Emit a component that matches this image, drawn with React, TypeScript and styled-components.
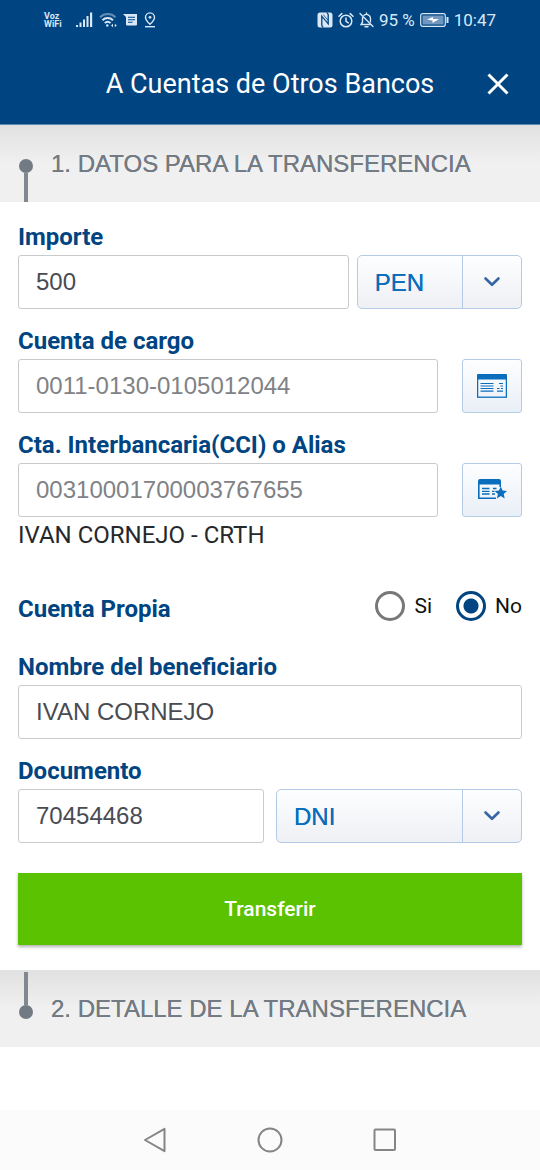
import React, { useState } from "react";
import styled, { createGlobalStyle, css } from "styled-components";

const navy = "#004481";
const blue = "#0a6ebd";
const slate = "#727a84";
const paleBlue = "#b5cae6";
const helvetica = `"Liberation Sans", Helvetica, Arial, sans-serif`;

const GlobalStyle = createGlobalStyle`
  *, *::before, *::after { box-sizing: border-box; }
  body { margin: 0; background: #fff; font-family: Roboto, sans-serif; }
  button, input, select { margin: 0; font: inherit; }
`;

const Screen = styled.div`
  display: flex;
  flex-direction: column;
  min-height: 100vh;
`;

const Header = styled.header`
  background: ${navy};
  color: #fff;
  border-bottom: 1px solid #5c88b3;
`;

const StatusBar = styled.div`
  display: flex;
  justify-content: space-between;
  align-items: center;
  height: 40px;
  padding: 0 44px;
  color: #d9e8f7;
  font-size: 17px;
  line-height: 20px;
`;

const StatusGroup = styled.div<{ $gap: number }>`
  display: flex;
  align-items: center;
  gap: ${(p) => p.$gap}px;

  svg { display: block; flex: none; }
`;

const Carrier = styled.span`
  width: 26px;
  font-size: 9px;
  line-height: 8px;
  font-weight: 700;
`;

const Battery = styled.span`
  white-space: nowrap;
`;

const TitleBar = styled.div`
  display: grid;
  grid-template-columns: 44px 1fr 44px;
  align-items: center;
  height: 84px;
  padding: 4px 20px 0;
`;

const Title = styled.h1`
  grid-column: 2;
  margin: 0;
  font-size: 27px;
  line-height: 36px;
  font-weight: 400;
  text-align: center;
  white-space: nowrap;
`;

const CloseButton = styled.button`
  display: grid;
  place-items: center;
  width: 44px;
  height: 44px;
  padding: 0;
  border: 0;
  background: none;
  color: #fff;
`;

const Step = styled.section`
  display: flex;
  align-items: center;
  gap: 18px;
  height: 77px;
  padding-left: 19px;
  background: linear-gradient(#e1e1e1, #f0f0f0 50%);
`;

const Marker = styled.span<{ $end?: boolean }>`
  display: flex;
  flex-direction: ${(p) => (p.$end ? "column-reverse" : "column")};
  align-items: center;
  align-self: stretch;
  width: 14px;
  padding: ${(p) => (p.$end ? "2px 0 28px" : "34px 0 0")};

  &::before {
    content: "";
    width: 14px;
    height: 14px;
    border-radius: 50%;
    background: ${slate};
  }

  &::after {
    content: "";
    flex: 1;
    width: 4px;
    background: #82888f;
  }
`;

/* Liberation Sans has no medium weight: a shadow without blur thickens the regular one. */
const mediumHelvetica = css`
  font-family: ${helvetica};
  font-weight: 400;
  text-shadow: 0 0 0 currentColor;
`;

const StepTitle = styled.h2`
  ${mediumHelvetica}
  margin: 0;
  color: ${slate};
  font-size: 24px;
  line-height: 28px;
`;

const Form = styled.form`
  display: flex;
  flex-direction: column;
  gap: 18px;
  padding: 21px 18px 25px;
`;

const Field = styled.div`
  display: flex;
  flex-direction: column;
  gap: 4px;
`;

const labelText = css`
  color: ${navy};
  font-size: 24px;
  line-height: 28px;
  font-weight: 700;
`;

const Label = styled.label`
  ${labelText}
`;

const FieldRow = styled.div<{ $columns?: string; $gap?: number }>`
  display: grid;
  grid-template-columns: ${(p) => p.$columns ?? "1fr"};
  gap: ${(p) => p.$gap ?? 0}px;
`;

const TextInput = styled.input<{ $muted?: boolean }>`
  width: 100%;
  min-width: 0;
  height: 54px;
  padding: 0 17px;
  border: 1px solid #c9cacc;
  border-radius: 3px;
  background: #fff;
  color: ${(p) => (p.$muted ? "#7f8286" : "#484b52")};
  font-family: ${helvetica};
  font-size: 24px;
`;

const SelectBox = styled.span`
  display: grid;
  grid-template-columns: 1fr 59px;
  height: 54px;
  border: 1px solid ${paleBlue};
  border-radius: 5px;
  background: linear-gradient(#fdfeff, #eef0f4);
`;

const NativeSelect = styled.select`
  ${mediumHelvetica}
  grid-area: 1 / 1 / 2 / 3;
  appearance: none;
  min-width: 0;
  padding: 0 17px;
  border: 0;
  background: none;
  color: ${blue};
  font-size: 24px;
`;

const SelectArrow = styled.span`
  grid-area: 1 / 2 / 2 / 3;
  display: grid;
  place-items: center;
  border-left: 1px solid ${paleBlue};
  pointer-events: none;
`;

const IconButton = styled.button`
  display: grid;
  place-items: center;
  height: 54px;
  padding: 0;
  border: 1px solid ${paleBlue};
  border-radius: 3px;
  background: linear-gradient(#fdfeff, #e9eff7);
  color: ${blue};
`;

const Helper = styled.p`
  margin: 0;
  color: #26282b;
  font-size: 24px;
  line-height: 28px;
`;

const RadioRow = styled.fieldset`
  display: flex;
  align-items: center;
  justify-content: space-between;
  height: 32px;
  min-width: 0;
  margin: 21px 0 15px;
  padding: 0;
  border: 0;
`;

const RadioTitle = styled.span`
  ${labelText}
  padding-top: 7px;
`;

const RadioOptions = styled.div`
  display: flex;
  gap: 24px;
`;

const RadioLabel = styled.label`
  display: flex;
  align-items: center;
  gap: 9px;
  color: #111;
  font-size: 21px;
  line-height: 28px;
`;

const Radio = styled.input`
  appearance: none;
  width: 30px;
  height: 30px;
  border: 3px solid #777;
  border-radius: 50%;
  background: #fff;

  &:checked {
    border-color: ${navy};
    background: radial-gradient(circle, ${navy} 7px, #fff 8px);
  }
`;

const SubmitButton = styled.button`
  height: 72px;
  margin-top: 12px;
  border: 0;
  background: #5ac200;
  box-shadow: 0 2px 3px rgba(0, 0, 0, 0.3);
  color: #fff;
  font-size: 21px;
  font-weight: 500;
`;

const NavBar = styled.nav`
  display: flex;
  align-items: center;
  justify-content: center;
  gap: 67px;
  height: 60px;
  margin-top: auto;
  background: #fbfbfb;
`;

const NavButton = styled.button`
  display: grid;
  place-items: center;
  width: 48px;
  height: 48px;
  padding: 0;
  border: 0;
  background: none;
  color: #858585;
`;

const SignalIcon = () => (
  <svg width="17" height="16" viewBox="0 0 17 16" fill="currentColor">
    <rect x="0" y="13" width="2" height="2" />
    <rect x="3.5" y="10.5" width="2" height="4.5" />
    <rect x="7" y="7.5" width="2" height="7.5" />
    <rect x="10.5" y="4" width="2" height="11" />
    <rect x="14" y="0.5" width="2.2" height="14.5" />
  </svg>
);

const WifiIcon = () => (
  <svg width="18" height="16" viewBox="0 0 18 16" fill="none" stroke="currentColor" strokeWidth="2">
    <path d="M1 5.2a11 11 0 0 1 15.5 0" opacity="0.45" />
    <path d="M3.4 8.2a7.6 7.6 0 0 1 10.6 0" />
    <path d="M5.8 11a4.4 4.4 0 0 1 5.8 0" />
    <circle cx="8.3" cy="13.5" r="1.2" fill="currentColor" stroke="none" />
    <path d="M12 13.5l2-1.8v3.6zM17.8 13.5l-2-1.8v3.6z" fill="currentColor" stroke="none" />
  </svg>
);

const MessageIcon = () => (
  <svg width="15" height="14" viewBox="0 0 15 14">
    <path d="M0 1h14v10.5a1 1 0 0 1-1 1H4a1 1 0 0 1-1-1V4z" fill="currentColor" />
    <path d="M5 4.3h7M5 6.8h7M5 9.3h4.5" stroke={navy} strokeWidth="1.1" />
  </svg>
);

const PinIcon = () => (
  <svg width="12" height="16" viewBox="0 0 12 16" fill="none" stroke="currentColor" strokeWidth="1.4">
    <path d="M6 12.2C3 9.4 1.5 7.4 1.5 5.4a4.5 4.5 0 0 1 9 0c0 2-1.5 4-4.5 6.8z" />
    <circle cx="6" cy="5.3" r="1.4" fill="currentColor" stroke="none" />
    <path d="M1 14.7h10" />
  </svg>
);

const NfcIcon = () => (
  <svg width="16" height="16" viewBox="0 0 16 16">
    <rect x="0.5" y="0.5" width="15" height="15" rx="2.5" fill="currentColor" />
    <path d="M6.2 15.5l-1.4-2V4.2l6.4 7.6V2.500l-1.400-2" fill="none" stroke={navy} strokeWidth="1.3" />
    <path d="M6.2 2.500l5 6" fill="none" stroke={navy} strokeWidth="0.8" />
  </svg>
);

const AlarmIcon = () => (
  <svg width="16" height="17" viewBox="0 0 16 17" fill="none" stroke="currentColor" strokeWidth="1.5" strokeLinecap="round">
    <circle cx="8" cy="9" r="5.8" />
    <path d="M8 6v3.3l2.3 1.5M1 4.2l2.8-2.6M15 4.2l-2.8-2.6" />
  </svg>
);

const MutedBellIcon = () => (
  <svg width="15" height="16" viewBox="0 0 15 16" fill="none" stroke="currentColor" strokeWidth="1.4" strokeLinecap="round">
    <path d="M5 3.3a4 4 0 0 1 6.5 3.2v3.2M3.5 5.8v4.4L2 12.5h9.5M1 1.5l13 13M7.5 1v1" />
    <path d="M6 14.8h3" />
  </svg>
);

const BatteryIcon = () => (
  <svg width="29" height="14" viewBox="0 0 29 14">
    <rect x="0.7" y="0.7" width="24.6" height="12.6" rx="2" fill="none" stroke="currentColor" strokeWidth="1.2" />
    <rect x="2.5" y="2.5" width="21" height="9" fill="#6f97c0" />
    <path d="M7 6.5l6-2.5v2h6l-6.5 4V7.5z" fill="#fff" />
    <path d="M27.5 4v6" stroke="currentColor" strokeWidth="2" />
  </svg>
);

const ChevronIcon = () => (
  <svg width="18" height="12" viewBox="0 0 18 12" fill="none" stroke="#3565a3" strokeWidth="2.6" strokeLinecap="round" strokeLinejoin="round">
    <path d="M2.5 2.5L9 8.8l6.5-6.3" />
  </svg>
);

const AccountIcon = () => (
  <svg width="30" height="24" viewBox="0 0 30 24" fill="none" stroke="currentColor">
    <path d="M0 5.5v-4Q0 0 1.500 0h27Q30 0 30 1.500v4z" fill="currentColor" stroke="none" />
    <rect x="0.6" y="1" width="28.8" height="22.2" strokeWidth="1.3" />
    <path d="M3.5 9.5h13M3.5 12h13M3.5 14.5h13M3.5 17.2h13" strokeWidth="1.2" />
    <path d="M22 9.5h4M23.5 12H26M20 14.5h2.5M24 14.5h2M20 17.2h6" strokeWidth="1.2" />
  </svg>
);

const FavoriteAccountIcon = () => (
  <svg width="29" height="22" viewBox="0 0 29 22" fill="none" stroke="currentColor">
    <path d="M0 5.5V2Q0 0 2 0h19q2 0 2 2v3.5z" fill="currentColor" stroke="none" />
    <path d="M22.2 5v3M.8 5v14.2H18" strokeWidth="1.6" />
    <path d="M4 9.5h7.5M4 12.3h7.5M4 15h7.5M15 9.5h3.5M14 12.3h2.5M14 15h3" strokeWidth="1.3" />
    <path
      d="M22.8 7.5l1.8 4.1 4.4.4-3.3 3 1 4.5-3.9-2.4-3.9 2.4 1-4.5-3.3-3 4.4-.4z"
      fill="currentColor"
      stroke="none"
    />
  </svg>
);

type SelectProps = { label: string; options: string[] };

const Select = ({ label, options }: SelectProps) => (
  <SelectBox>
    <NativeSelect aria-label={label}>
      {options.map((o) => (
        <option key={o}>{o}</option>
      ))}
    </NativeSelect>
    <SelectArrow>
      <ChevronIcon />
    </SelectArrow>
  </SelectBox>
);

export default function App() {
  const [own, setOwn] = useState("No");

  return (
    <Screen>
      <GlobalStyle />
      <Header>
        <StatusBar>
          <StatusGroup $gap={6}>
            <Carrier>Voz WiFi</Carrier>
            <SignalIcon />
            <WifiIcon />
            <MessageIcon />
            <PinIcon />
          </StatusGroup>
          <StatusGroup $gap={5}>
            <NfcIcon />
            <AlarmIcon />
            <MutedBellIcon />
            <Battery>95 %</Battery>
            <BatteryIcon />
            <span>10:47</span>
          </StatusGroup>
        </StatusBar>
        <TitleBar>
          <Title>A Cuentas de Otros Bancos</Title>
          <CloseButton aria-label="Cerrar">
            <svg width="22" height="22" viewBox="0 0 22 22" stroke="currentColor" strokeWidth="3">
              <path d="M1.5 1.5l19 19M20.5 1.5l-19 19" />
            </svg>
          </CloseButton>
        </TitleBar>
      </Header>

      <main>
        <Step>
          <Marker />
          <StepTitle>1. DATOS PARA LA TRANSFERENCIA</StepTitle>
        </Step>

        <Form onSubmit={(e) => e.preventDefault()}>
          <Field>
            <Label htmlFor="amount">Importe</Label>
            <FieldRow $columns="2fr 1fr" $gap={8}>
              <TextInput id="amount" inputMode="decimal" defaultValue="500" />
              <Select label="Moneda" options={["PEN", "USD"]} />
            </FieldRow>
          </Field>

          <Field>
            <Label htmlFor="source">Cuenta de cargo</Label>
            <FieldRow $columns="1fr 60px" $gap={24}>
              <TextInput id="source" $muted defaultValue="0011-0130-0105012044" />
              <IconButton type="button" aria-label="Elegir cuenta">
                <AccountIcon />
              </IconButton>
            </FieldRow>
          </Field>

          <Field>
            <Label htmlFor="target">Cta. Interbancaria(CCI) o Alias</Label>
            <FieldRow $columns="1fr 60px" $gap={24}>
              <TextInput id="target" $muted defaultValue="00310001700003767655" />
              <IconButton type="button" aria-label="Elegir favorito">
                <FavoriteAccountIcon />
              </IconButton>
            </FieldRow>
            <Helper>IVAN CORNEJO - CRTH</Helper>
          </Field>

          <RadioRow aria-labelledby="own-title">
            <RadioTitle id="own-title">Cuenta Propia</RadioTitle>
            <RadioOptions>
              {["Si", "No"].map((value) => (
                <RadioLabel key={value}>
                  <Radio
                    type="radio"
                    name="own"
                    value={value}
                    checked={own === value}
                    onChange={() => setOwn(value)}
                  />
                  {value}
                </RadioLabel>
              ))}
            </RadioOptions>
          </RadioRow>

          <Field>
            <Label htmlFor="beneficiary">Nombre del beneficiario</Label>
            <FieldRow>
              <TextInput id="beneficiary" defaultValue="IVAN CORNEJO" />
            </FieldRow>
          </Field>

          <Field>
            <Label htmlFor="document">Documento</Label>
            <FieldRow $columns="1fr 1fr" $gap={12}>
              <TextInput id="document" defaultValue="70454468" />
              <Select label="Tipo de documento" options={["DNI", "RUC"]} />
            </FieldRow>
          </Field>

          <SubmitButton type="submit">Transferir</SubmitButton>
        </Form>

        <Step>
          <Marker $end />
          <StepTitle>2. DETALLE DE LA TRANSFERENCIA</StepTitle>
        </Step>
      </main>

      <NavBar>
        <NavButton aria-label="Atrás">
          <svg width="24" height="26" viewBox="0 0 24 26" fill="none" stroke="currentColor" strokeWidth="2" strokeLinejoin="round">
            <path d="M21.5 1.8v22.4L2 13z" />
          </svg>
        </NavButton>
        <NavButton aria-label="Inicio">
          <svg width="26" height="26" viewBox="0 0 26 26" fill="none" stroke="currentColor" strokeWidth="2">
            <circle cx="13" cy="13" r="11.5" />
          </svg>
        </NavButton>
        <NavButton aria-label="Recientes">
          <svg width="24" height="24" viewBox="0 0 24 24" fill="none" stroke="currentColor" strokeWidth="2">
            <rect x="1.5" y="1.5" width="20.5" height="20.5" rx="1" />
          </svg>
        </NavButton>
      </NavBar>
    </Screen>
  );
}
